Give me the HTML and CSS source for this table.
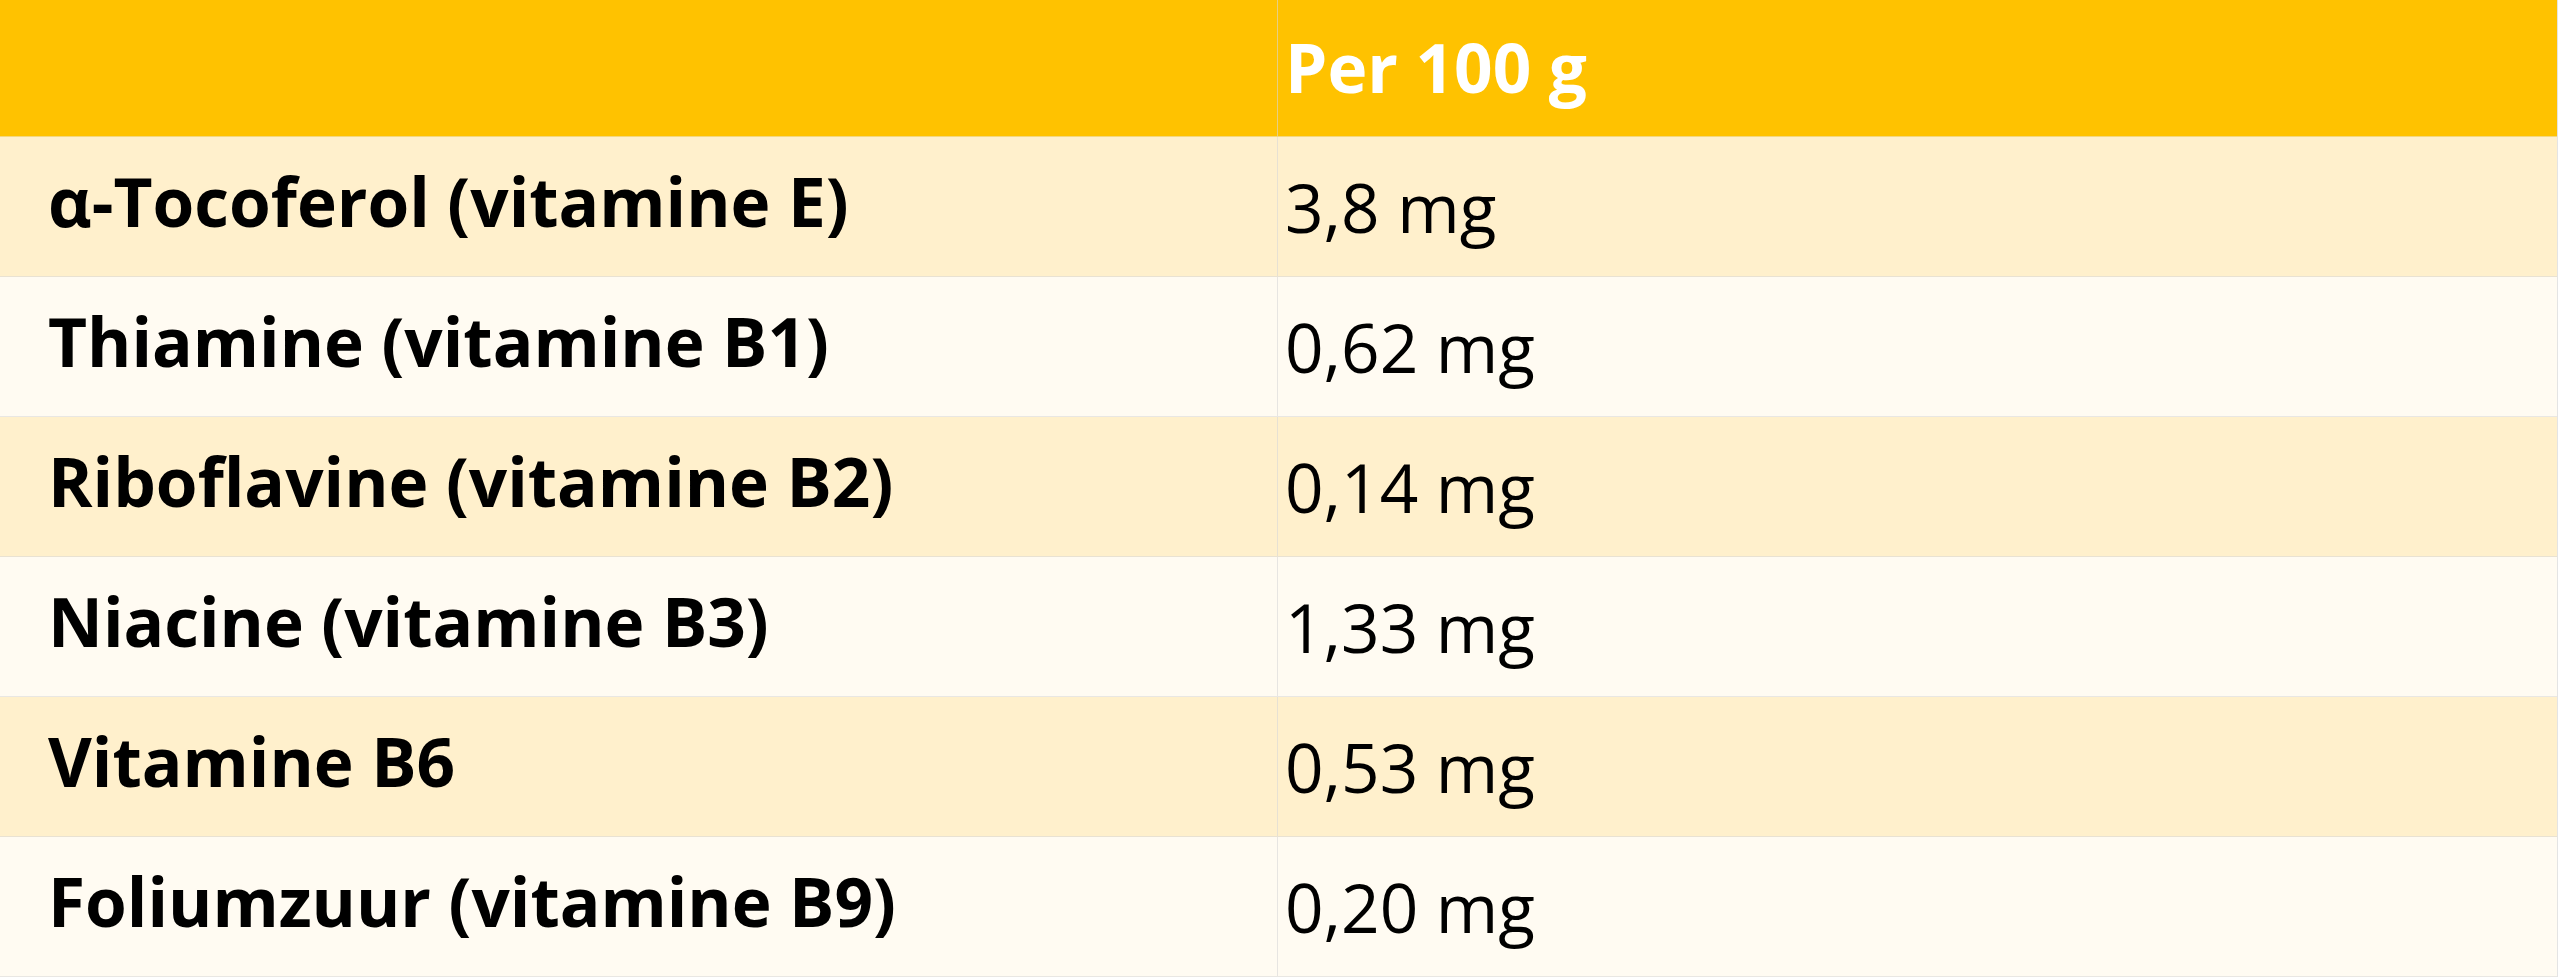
FILE: index.html
```html
<!DOCTYPE html>
<html lang="nl">
<head>
<meta charset="utf-8">
<title>Vitaminen per 100 g</title>
<link rel="stylesheet" href="styles.css">
</head>
<body>
<div class="nutri">
  <div class="row head">
    <div class="cell label"></div>
    <div class="cell value">Per 100 g</div>
  </div>
  <div class="row odd">
    <div class="cell label">α-Tocoferol (vitamine E)</div>
    <div class="cell value">3,8 mg</div>
  </div>
  <div class="row even">
    <div class="cell label">Thiamine (vitamine B1)</div>
    <div class="cell value">0,62 mg</div>
  </div>
  <div class="row odd">
    <div class="cell label">Riboflavine (vitamine B2)</div>
    <div class="cell value">0,14 mg</div>
  </div>
  <div class="row even">
    <div class="cell label">Niacine (vitamine B3)</div>
    <div class="cell value">1,33 mg</div>
  </div>
  <div class="row odd">
    <div class="cell label">Vitamine B6</div>
    <div class="cell value">0,53 mg</div>
  </div>
  <div class="row even">
    <div class="cell label">Foliumzuur (vitamine B9)</div>
    <div class="cell value">0,20 mg</div>
  </div>
</div>
</body>
</html>
```

FILE: styles.css
```css
html, body {
  margin: 0;
  padding: 0;
  background: #ffffff;
}

body {
  font-family: "Open Sans", "Noto Sans", sans-serif;
  font-size: 67.5px;
  color: #000000;
}

.nutri {
  width: 2557px;
  border-right: 1px solid #e4e4e4;
}

.row {
  display: grid;
  grid-template-columns: 1277px 1fr;
  height: 140px;
  box-sizing: border-box;
  border-bottom: 1px solid rgba(215, 215, 215, 0.55);
}

.row.head {
  height: 137px;
  background: #ffc200;
  color: #ffffff;
  font-weight: 700;
  border-bottom: 1px solid rgba(240, 225, 180, 0.7);
}

.row.odd {
  background: #fff0cc;
}

.row.even {
  background: #fffbf2;
}

.cell {
  display: flex;
  align-items: center;
  white-space: nowrap;
}

.cell.label {
  padding-left: 48px;
  padding-bottom: 12px;
  font-weight: 700;
}

.cell.value {
  padding-left: 7px;
  border-left: 1px solid rgba(215, 215, 215, 0.6);
}

.row.head .cell.value {
  padding-bottom: 2px;
}

.row.head .cell.label {
  padding-bottom: 0;
}
```
